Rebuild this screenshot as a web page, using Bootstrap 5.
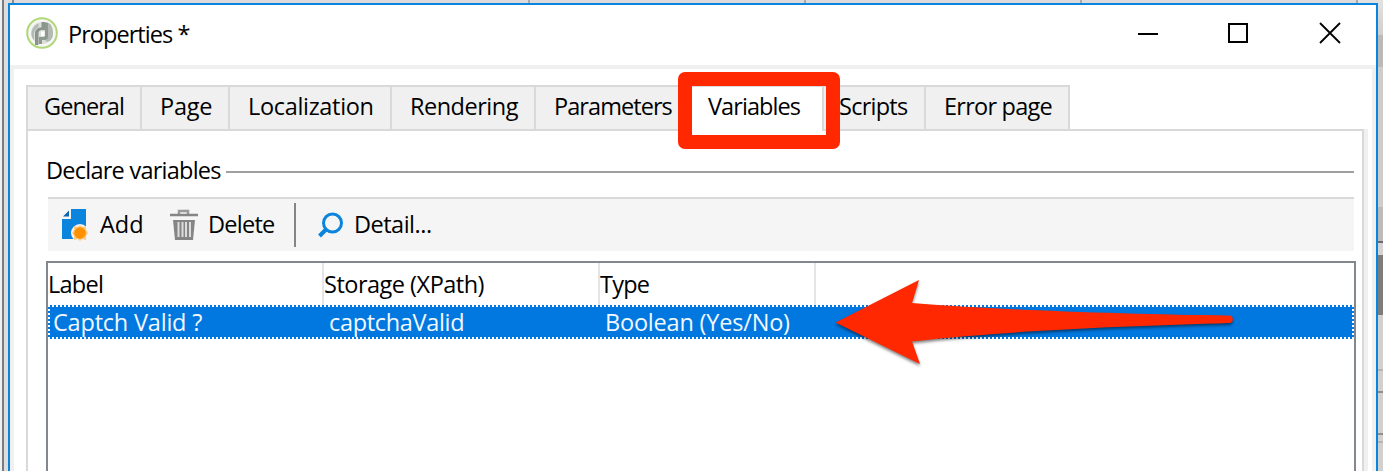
<!DOCTYPE html>
<html lang="en">
<head>
<meta charset="utf-8">
<title>Properties</title>
<link href="https://cdn.jsdelivr.net/npm/bootstrap@5.3.0/dist/css/bootstrap.min.css" rel="stylesheet">
<style>
  body { height: 471px; background: #dcdada; color: #000; font: 23.5px/30px "Open Sans", "Noto Sans", sans-serif; letter-spacing: -.75px; }
  .desk { height: 471px; background: linear-gradient(90deg, #f0f0f0 0 2px, #777b82 2px 4px, #dedddc 4px 8px, transparent 8px); }
  .desk-top { left: 8px; right: 0; top: 0; height: 3px; background: linear-gradient(90deg, transparent 4px, #8a8c90 4px 6px, transparent 6px 520px, #aaa 520px 522px, transparent 522px 796px, #aaa 796px 798px, transparent 798px 1072px, #aaa 1072px 1074px, transparent 1074px 1348px, #aaa 1348px 1350px, #e2e1e1 1350px); }
  .desk-right { left: 1378px; right: 0; top: 0; height: 471px; background: linear-gradient(#e2e2e2 0, #cfcfcf 35px, #bababa 35px 67px, #cecdcd 67px 207px, #bbb 207px 241px, #6c6c6f 241px 243px, #d4d3d3 243px 255px, #7d7c7c 255px 315px, #d1d0d0 315px 369px, #b5b5b5 369px 371px, #d1d0d0 371px 391px, #8f8f8f 391px 393px, #d1d0d0 393px 433px, #8f8f8f 433px 435px, #d1d0d0 435px 441px, #b5b5b5 441px 443px, #d1d0d0 443px); }
  .win { margin: 3px 5px 0 8px; height: 468px; border: 2px solid #0a84dc; border-bottom: 0; background: #fff; }
  .titlebar { height: 60px; padding: 0 34px 4px 16px; }
  .caption-text { margin: 2px 0 0 9px; letter-spacing: -.95px; }
  .frame { border: 4px solid #f0f0f0; border-bottom: 0; height: 406px; padding: 16px 4px 0 12px; }
  .tabs { height: 46px; margin-bottom: -2px; }
  .tab { height: 46px; border: 2px solid #d9d9d9; background: #f0f0f0; margin-right: -2px; padding: 3px 0 0 18px; line-height: 32px; white-space: nowrap; border-radius: 0; }
  .tab:first-child { padding-left: 16px; }
  .tab.current { background: #fff; border-bottom-color: #fff; }
  .ls-tight { letter-spacing: -.93px; }
  .ls-mid { letter-spacing: -.5px; }
  .ls-loose { letter-spacing: -.32px; }
  .ls-wide { letter-spacing: -.2px; }
  .pane { height: 342px; border: 2px solid #d9d9d9; border-bottom: 0; box-shadow: 4px 0 #f0f0f0; margin-right: 4px; padding: 24px 8px 0 18px; }
  .legend-row { height: 32px; }
  .legend-row span { width: 176px; white-space: nowrap; margin-top: -2px; }
  .legend-row hr { margin: 1px 0 0 4px; border: 0; height: 2px; background: #a0a0a0; opacity: 1; }
  .tools { height: 54px; margin: 10px 0 0 2px; background: #f5f5f5; border-top: 2px solid #d9d9d9; padding-left: 13px; }
  .tools span { white-space: nowrap; margin-top: -2px; }
  .add-t { width: 45px; letter-spacing: 0; }
  .del-t { width: 66px; }
  .tool-sep { width: 2px; height: 44px; background: #858585; margin-left: 20px; }
  .grid { margin: 10px -2px 0 0; height: 210px; border: 2px solid #828790; border-bottom: 0; }
  .gridrow { display: grid; grid-template-columns: 276px 276px 216px 1fr; white-space: nowrap; }
  .head-row { height: 42px; }
  .head-row > div { height: 42px; border-right: 2px solid #e5e5e5; line-height: 43px; padding-left: 0; }
  .head-row > div:last-child { border: 0; }
  .sel { height: 34px; color: #f2f8ff; line-height: 35px; background: #0078e0; position: relative; }
  .sel > div { padding-left: 5px; height: 34px; }
  .sel .focus { position: absolute; inset: 0; padding: 0; background:
      repeating-linear-gradient(90deg, #fff 0 2px, #0078e0 2px 4px) 0 0/100% 2px no-repeat,
      repeating-linear-gradient(90deg, #fff 0 2px, #0078e0 2px 4px) 0 100%/100% 2px no-repeat,
      repeating-linear-gradient(#fff 0 2px, #0078e0 2px 4px) 0 0/2px 100% no-repeat,
      repeating-linear-gradient(#fff 0 2px, #0078e0 2px 4px) 100% 0/2px 100% no-repeat; }
  .ring { left: 678px; top: 72px; width: 162px; height: 77px; border: 14px solid #ff2800; border-radius: 7px; }
  .arrow { left: 825px; top: 270px; }
</style>
<script src="https://cdn.jsdelivr.net/npm/bootstrap@5.3.0/dist/js/bootstrap.bundle.min.js"></script>
</head>
<body class="overflow-hidden">
<div class="desk position-relative overflow-hidden">
  <div class="desk-top position-absolute"></div>
  <div class="desk-right position-absolute"></div>
  <div class="d-flex flex-column h-100">
  <div class="win">
    <div class="titlebar d-flex align-items-center">
      <svg width="33" height="33" viewBox="0 0 33 33">
        <circle cx="16" cy="16" r="14.800" fill="#f6f7f5" stroke="#b0d878" stroke-width="2"/>
        <circle cx="16" cy="16" r="11" fill="#dcdedb"/>
        <path d="M20 5c5 1 7 5 7 11 0 5-2 8-6 9l-2-2V5z" fill="#b3bab3"/>
        <path d="M15.500 5h3.500v8h-3c-2.500 0-3.500 1.500-3.500 3.500V28H9V17c0-4 2-6.500 6.500-6.500z" fill="#89948b"/>
        <path d="M19 6h3v14c0 2-1.500 3-4 3h-2v4h-3v-7h4c1.500 0 2-.5 2-2z" fill="#8d988f"/>
        <path d="M5.500 17c0-5 3-9 7-10.500V10c-3 1.500-4.500 4-4.500 7v6c-1.500-1.500-2.500-3-2.500-6z" fill="#b3bab3"/>
        <path d="M15 14.500h3.500V19H15z" fill="#fff"/>
      </svg>
      <span class="caption-text">Properties *</span>
      <svg class="ms-auto" width="204" height="22" viewBox="0 0 204 22">
        <path d="M0 12h20" stroke="#000" stroke-width="2"/>
        <path d="M91 2h18v18H91z" fill="none" stroke="#000" stroke-width="2"/>
        <path d="M182 1l20 20M202 1l-20 20" stroke="#000" stroke-width="1.800"/>
      </svg>
    </div>
    <div class="frame">
      <div class="tabs d-flex">
        <div class="tab ls-tight" style="width:116px"><span>General</span></div>
        <div class="tab ls-wide" style="width:90px"><span>Page</span></div>
        <div class="tab ls-loose" style="width:164px"><span>Localization</span></div>
        <div class="tab ls-mid" style="width:146px"><span>Rendering</span></div>
        <div class="tab ls-tight" style="width:156px"><span>Parameters</span></div>
        <div class="tab current ls-tight" style="width:136px"><span>Variables</span></div>
        <div class="tab" style="width:104px;padding-left:15px"><span>Scripts</span></div>
        <div class="tab" style="width:146px"><span>Error page</span></div>
      </div>
      <div class="pane">
        <div class="legend-row d-flex align-items-center"><span>Declare variables</span><hr class="flex-grow-1"></div>
        <div class="tools d-flex align-items-center">
          <svg width="28" height="34" viewBox="0 0 28 34">
            <path d="M10 1h15v17h-6l-6 6v7H1V11h9z" fill="#0a84dc"/>
            <path d="M2 8.500l6-6v6z" fill="#0a66b0"/>
            <circle cx="19" cy="25" r="9" fill="#f5f5f5"/>
            <path d="M19 17l2 2 4-1v4l2 3-2 3v4l-4-1-2 2-2-2-4 1v-4l-2-3 2-3v-4l4 1z" fill="#ffc880"/>
            <circle cx="19" cy="25" r="5.800" fill="#ff9000"/>
          </svg>
          <span class="add-t" style="margin-left:11px">Add</span>
          <svg style="margin-left:24px" width="30" height="34" viewBox="0 0 30 34">
            <path d="M10 6V3h9v3" fill="none" stroke="#999" stroke-width="2.500"/>
            <path d="M1 7h28" stroke="#858585" stroke-width="2.500"/>
            <path d="M4 12h22l-2 20H6z" fill="#858585"/>
            <path d="M9.500 14v15M13.500 14v15M17 14v15M21 14v15" stroke="#ddd" stroke-width="2"/>
          </svg>
          <span class="del-t" style="margin-left:9px">Delete</span>
          <div class="tool-sep"></div>
          <svg style="margin-left:22px" width="26" height="28" viewBox="0 0 26 28">
            <circle cx="14.500" cy="12" r="9" fill="none" stroke="#0a84dc" stroke-width="3"/>
            <path d="M8 18.500l-6.500 6.500" stroke="#0a84dc" stroke-width="4"/>
          </svg>
          <span class="ls-mid" style="margin-left:10px">Detail...</span>
        </div>
        <div class="grid">
          <div class="gridrow head-row"><div>Label</div><div class="ls-mid">Storage (XPath)</div><div>Type</div><div></div></div>
          <div class="gridrow sel ls-wide"><div>Captch Valid ?</div><div class="ls-loose">captchaValid</div><div>Boolean (Yes/No)</div><div class="focus"></div></div>
        </div>
      </div>
    </div>
  </div>
  </div>
  <div class="ring position-absolute"></div>
  <svg class="arrow position-absolute" width="420" height="104" viewBox="825 270 420 104">
    <path d="M835.500 322.500L919 280l-7 23C1000 310 1130 314.500 1229 315.500a3.800 3.800 0 0 1 0 7.600C1130 326 1000 331 912 341.500l8 22.500z" fill="#ff2800" style="filter:drop-shadow(0 2px 1.500px rgba(0,0,0,.5))"/>
  </svg>
</div>
</body>
</html>
